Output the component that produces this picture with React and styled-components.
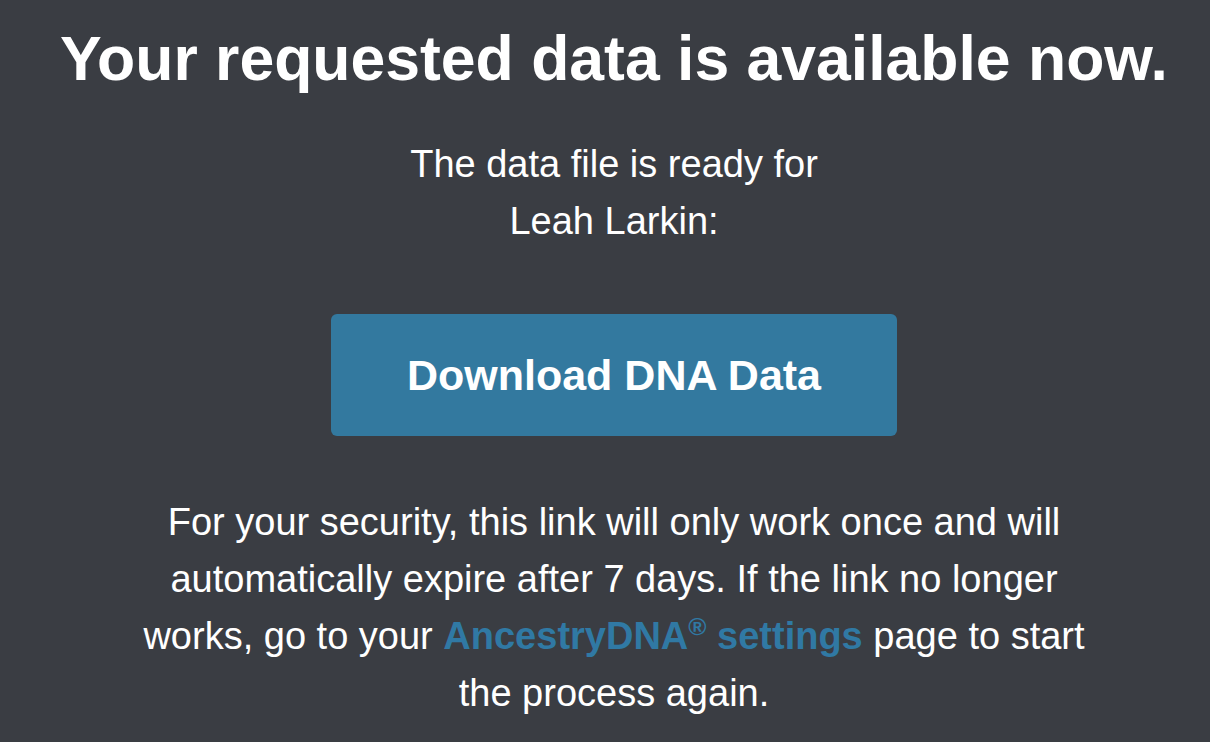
import React from 'react'
import styled, { createGlobalStyle } from 'styled-components'

const GlobalStyle = createGlobalStyle`
  html, body {
    margin: 0;
    padding: 0;
    background-color: #3a3d43;
  }
  body {
    font-family: "Liberation Sans", Arial, Helvetica, sans-serif;
    color: #ffffff;
  }
`

const Page = styled.main`
  display: flex;
  flex-direction: column;
  align-items: center;
  min-height: 742px;
  padding: 22px 0 0 18px;
  box-sizing: border-box;
  text-align: center;
`

const Heading = styled.h1`
  margin: 0;
  font-size: 62.5px;
  line-height: 72px;
  font-weight: 700;
  color: #ffffff;
  white-space: nowrap;
`

const Text = styled.p`
  margin: ${({ $top }) => $top || 0} 0 0;
  max-width: ${({ $width }) => $width || 'none'};
  font-size: 38px;
  line-height: 57px;
  color: #ffffff;
`

const Button = styled.a`
  display: flex;
  align-items: center;
  justify-content: center;
  width: 566px;
  height: 122px;
  margin-top: 64px;
  border-radius: 6px;
  background-color: #33799f;
  color: #ffffff;
  font-size: 43px;
  font-weight: 700;
  text-decoration: none;
`

const Link = styled.a`
  color: #3079a4;
  font-weight: 700;
  text-decoration: none;

  sup {
    font-size: 0.65em;
    line-height: 0;
  }
`

const App = () => (
  <>
    <GlobalStyle />
    <Page>
      <Heading>Your requested data is available now.</Heading>
      <Text $top="42px">
        The data file is ready for
        <br />
        Leah Larkin:
      </Text>
      <Button href="#">Download DNA Data</Button>
      <Text $top="58px" $width="980px">
        For your security, this link will only work once and will
        automatically expire after 7 days. If the link no longer works, go
        to your{' '}
        <Link href="#">
          AncestryDNA<sup>®</sup> settings
        </Link>{' '}
        page to start the process again.
      </Text>
    </Page>
  </>
)

export default App
